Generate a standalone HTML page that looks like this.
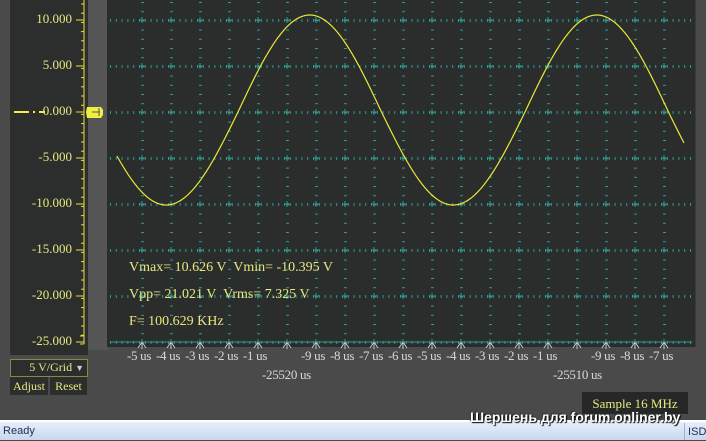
<!DOCTYPE html>
<html><head><meta charset="utf-8"><style>
body{margin:0;width:706px;height:440px;overflow:hidden;background:#4a4a4a;font-family:"Liberation Serif",serif;position:relative}
.a{position:absolute}
.yl{color:#e8e880;font-size:12px}
.tl{color:#d8d8d8;font-size:13px;white-space:nowrap;letter-spacing:-0.3px}
</style></head><body>
<div class="a" style="left:10px;top:0;width:78px;height:355px;background:#2b2e2d"></div>
<div class="a" style="left:88px;top:0;width:20px;height:350px;background:#565656"></div>
<div class="a" style="left:107px;top:0;width:588px;height:347px;background:#2a2d2c;border-right:1px solid #3a3a3a"></div>
<svg class="a" style="left:0;top:0" width="706" height="420">
<g id="g"></g>
<line x1="84" y1="0" x2="84" y2="344" stroke="#e8e040" stroke-width="1"/>
<path d="M80 344H84M80 336H84" stroke="#e8e040"/>
<path d="M14 112H29M33 112H35M39 112H45" stroke="#f0f040" stroke-width="2"/>
<path d="M87 107H101L103 110V115L101 118H87L86 112Z" fill="#f0f040"/>
<path d="M92 112H100M99 108V116" stroke="#555" stroke-width="1"/>
<polyline id="w" fill="none" stroke="#e8e838" stroke-width="1.2"/>
</svg>
<div id="lb"></div>
<div class="a yl" style="left:10px;top:359px;width:76px;height:16px;border:1px solid #888840;background:#2b2e2d;text-align:right;line-height:15px"><span>5 V/Grid</span> <span style="color:#ccc;font-size:9px">▼</span>&nbsp;</div>
<div class="a yl" style="left:10px;top:377px;width:38px;height:18px;background:#2b2e2d;line-height:18px;text-align:center">Adjust</div>
<div class="a yl" style="left:50px;top:377px;width:37px;height:18px;background:#2b2e2d;line-height:18px;text-align:center">Reset</div>
<div class="a tl" style="left:262px;top:367px">-25520 us</div>
<div class="a tl" style="left:553px;top:367px">-25510 us</div>
<div class="a yl" style="left:582px;top:392px;width:106px;height:22px;background:#252827;line-height:24px;text-align:center;font-size:13px">Sample 16 MHz</div>
<div class="a yl" style="left:129px;top:260px;font-size:14px">Vmax= 10.626 V&nbsp; Vmin= -10.395 V</div>
<div class="a yl" style="left:129px;top:287px;font-size:14px">Vpp= 21.021 V&nbsp; Vrms= 7.325 V</div>
<div class="a yl" style="left:129px;top:314px;font-size:14px">F= 100.629 KHz</div>
<div class="a" style="left:0;top:420px;width:706px;height:2px;background:#fff"></div>
<div class="a" style="left:0;top:422px;width:706px;height:18px;background:linear-gradient(#e6eefa,#c8d8f0);font-family:'Liberation Sans',sans-serif;font-size:11px;color:#203050;line-height:19px">&nbsp;Ready</div>
<div class="a" style="left:684px;top:423px;width:22px;height:17px;border-left:1px solid #a0b0c8;font-family:'Liberation Sans',sans-serif;font-size:11px;color:#203050;line-height:18px">&nbsp;ISD</div>
<div class="a" style="left:470px;top:409px;font-family:'Liberation Sans',sans-serif;font-weight:bold;font-size:14px;color:#fff;text-shadow:1px 1px 1px #000,-1px -1px 1px #333">Шершень для forum.onliner.by</div>
<script>
var g='',c='#2f9a90';
for(var y=20;y<=342;y+=46){for(var x=110;x<692;x+=5.8)g+='<rect x="'+x.toFixed(1)+'" y="'+(y-1)+'" width="1" height="3" fill="'+c+'"/>';}
for(var x=142;x<692;x+=29){for(var y=2;y<344;y+=9.2)g+='<rect x="'+(x-1)+'" y="'+y.toFixed(1)+'" width="3" height="1" fill="'+c+'"/>';
 for(var y=20;y<=342;y+=46)g+='<path d="M'+(x-3)+' '+y+'H'+(x+3)+'M'+x+' '+(y-3)+'V'+(y+3)+'" stroke="'+c+'"/>';
 g+='<path d="M'+(x-4)+' 348L'+x+' 342L'+(x+4)+' 348M'+x+' 342V349" stroke="#ccc" fill="none"/>';}
g+='<line x1="110" y1="342" x2="692" y2="342" stroke="'+c+'"/>';
for(var y=4;y<344;y+=9.2)g+='<line x1="81" y1="'+y.toFixed(1)+'" x2="84" y2="'+y.toFixed(1)+'" stroke="#e8e040"/>';
for(var y=20;y<=342;y+=46)g+='<line x1="76" y1="'+y+'" x2="84" y2="'+y+'" stroke="#e8e040"/>';
document.getElementById('g').innerHTML=g;
var p='';for(var x=117;x<=684;x++){var v=Math.sin(2*Math.PI*(x-238)/287);p+=x+','+(112-(v>0?97:93)*v).toFixed(1)+' ';}
document.getElementById('w').setAttribute('points',p);
var h='',vals=['10.000','5.000','0.000','-5.000','-10.000','-15.000','-20.000','-25.000'];
for(var i=0;i<8;i++)h+='<div class="a yl" style="right:634px;top:'+(11+46*i)+'px;font-size:13px">'+vals[i]+'</div>';
var t=['-5','-4','-3','-2','-1',null,'-9','-8','-7','-6','-5','-4','-3','-2','-1',null,'-9','-8','-7'];
for(var i=0;i<t.length;i++)if(t[i])h+='<div class="a tl" style="left:'+(142+29*i-15)+'px;top:348px">'+t[i]+' us</div>';
document.getElementById('lb').innerHTML=h;
</script>
</body></html>
